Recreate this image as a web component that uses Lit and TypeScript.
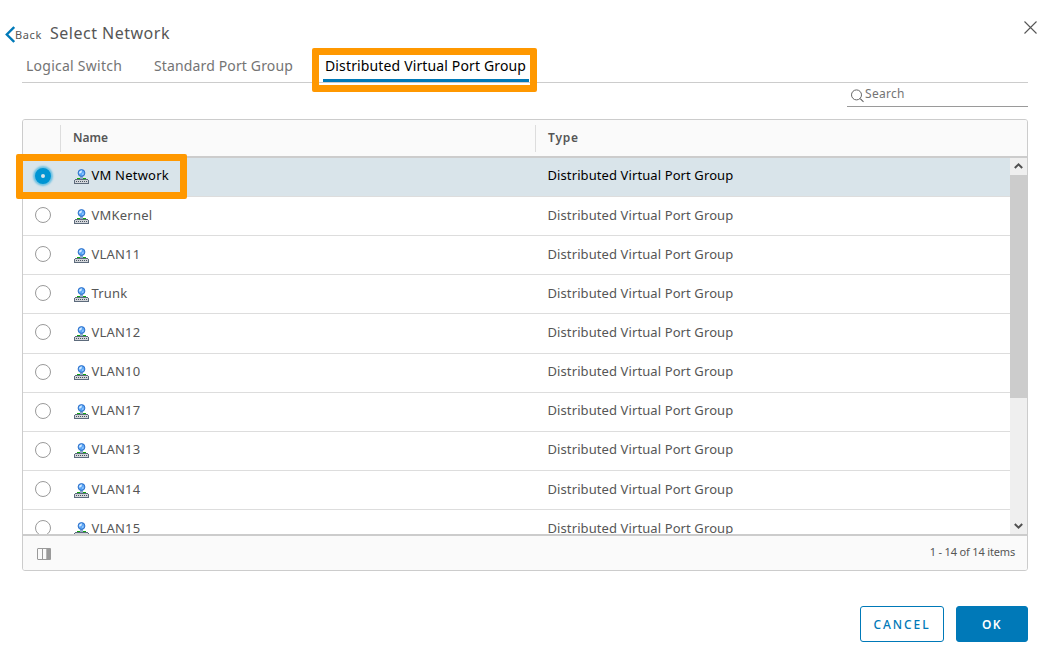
import { LitElement, html, css } from "lit";
import { customElement, property } from "lit/decorators.js";

const NETWORKS = ["VM Network", "VMKernel", "VLAN11", "Trunk", "VLAN12", "VLAN10", "VLAN17", "VLAN13", "VLAN14", "VLAN15"];

@customElement("port-group-icon")
class PortGroupIcon extends LitElement {
  static styles = css`
    :host { display: block; width: 15px; height: 15px; }
    svg { display: block; }
  `;
  render() {
    return html`<svg width="15" height="15" viewBox="0 0 15 15">
      <path d="M6 7h3v3H6z" fill="#8fa9c8" />
      <path d="M3 9h3v1H3zM9 9h3v1H9z" fill="#11a611" />
      <circle cx="7.5" cy="4" r="3.4" fill="#5aa5f5" stroke="#2468c4" stroke-width=".9" />
      <path d="M5 4C5.200 2.200 6.300 1.300 8 1.500L7.600 3.500 5.800 4.800z" fill="#d4eaff" />
      <path d="M8.300 4.200l1.500-.7-.5 2.200-1.300.5z" fill="#9accff" />
      <g shape-rendering="crispEdges">
        <path d="M1 10h13v1h1v4H0v-4h1z" fill="#5d6b7c" />
        <path d="M1 11h13v3H1z" fill="#d3d6da" />
        <path d="M2 12h1v1H2zM4 12h1v1H4zM6 12h1v1H6zM8 12h1v1H8zM10 12h1v1h-1zM12 12h1v1h-1z" fill="#4b5563" />
      </g>
    </svg>`;
  }
}

@customElement("network-row")
class NetworkRow extends LitElement {
  @property() name = "";
  @property({ type: Boolean, reflect: true }) selected = false;
  static styles = css`
    :host {
      display: grid; grid-template-columns: 51px 473.5px 1fr; box-sizing: border-box;
      height: 39.15px; flex: none; border-bottom: 1px solid #ddd; color: #565656; background: #fff;
      font-size: 13px; line-height: 37px;
    }
    :host([selected]) { background: #d9e4ea; color: #000; }
    .radio {
      box-sizing: border-box; width: 16px; height: 16px; margin: 10px 0 0 12px;
      border: 1px solid #9a9a9a; border-radius: 50%; background: #fff;
    }
    :host([selected]) .radio {
      border: 6px solid #0095d3; background: #d9e4ea; box-shadow: 0 0 2px 2px #6bc1e3;
    }
    .name { display: flex; letter-spacing: .23px; margin-top: -.45px; }
    port-group-icon { margin: 12px 2.4px 0 0; }
    .type { letter-spacing: .1px; margin-top: -.45px; }
  `;
  render() {
    return html`<div class="radio"></div>
      <div class="name"><port-group-icon></port-group-icon><span>${this.name}</span></div>
      <div class="type">Distributed Virtual Port Group</div>`;
  }
}

@customElement("app-root")
class AppRoot extends LitElement {
  static styles = css`
    :host {
      display: block; position: relative; box-sizing: border-box; width: 1047px; height: 661px;
      overflow: hidden; background: #fff; color: #565656; font-family: "Noto Sans", sans-serif;
    }
    svg { display: block; }
    .top { display: flex; height: 50px; }
    .back { display: flex; padding: 26px 0 0 5px; width: 50px; box-sizing: border-box; font-size: 11px; line-height: 18px; letter-spacing: .6px; }
    .title { font-size: 16px; line-height: 24px; padding-top: 21px; letter-spacing: .5px; flex: 1; }
    .close { padding: 21px 10px 0 0; }
    .tabs { display: flex; margin: 0 19px 0 22px; height: 32px; border-bottom: 1px solid #ccc; font-size: 14px; line-height: 32px; letter-spacing: .14px; color: #747474; }
    .tab { white-space: nowrap; box-sizing: border-box; height: 32px; }
    .first { width: 128px; padding-left: 4px; letter-spacing: .25px; }
    .second { width: 173px; padding-left: 4px; }
    .active { width: 206px; padding-left: 2px; color: #000; border-bottom: 3px solid #0079b8; }
    .search { display: flex; box-sizing: border-box; width: 181px; height: 24px; margin-left: 847px; padding-left: 4px; border-bottom: 1px solid #9a9a9a; font-size: 12px; line-height: 21px; letter-spacing: .3px; color: #747474; }
    .search svg { margin: 6px 0 0; }
    .table { box-sizing: border-box; width: 1006px; height: 452px; margin: 12px 0 0 22px; border: 1px solid #ccc; border-radius: 3px; overflow: hidden; display: flex; flex-direction: column; }
    .head { display: flex; align-items: flex-start; padding-top: 5px; box-sizing: border-box; height: 38px; flex: none; border-bottom: 2px solid #ccc; background: #fafafa; font-size: 12px; font-weight: 600; line-height: 25px; }
    .cell { box-sizing: border-box; height: 27px; border-left: 1px solid #ddd; padding-left: 12px; }
    .cell.name { margin-left: 37px; width: 475px; }
    .cell.type { letter-spacing: .8px; }
    .body { display: flex; height: 376px; flex: none; overflow: hidden; }
    .rows { display: flex; flex-direction: column; flex: 1; margin-top: -.15px; }
    .bar { width: 17px; background: #efefef; display: flex; flex-direction: column; }
    .thumb { height: 223px; background: #ccc; margin-bottom: 119px; }
    .foot { display: flex; justify-content: space-between; flex: 1; border-top: 2px solid #ccc; background: #fafafa; padding: 0 12px 0 14px; font-size: 11px; line-height: 32px; letter-spacing: -.17px; }
    .foot svg { margin-top: 12px; }
    .actions { display: flex; justify-content: flex-end; gap: 12px; margin: 35px 19px 0 0; }
    button { box-sizing: border-box; height: 36px; border: 1px solid #0079b8; border-radius: 3px; padding: 0; font: 500 12px "Noto Sans", sans-serif; letter-spacing: 1.4px; }
    .cancel { width: 84px; background: #fff; color: #0079b8; letter-spacing: 1.95px; }
    .ok { width: 72px; background: #0079b8; color: #fff; font-weight: 600; }
    .mark { position: absolute; box-sizing: border-box; border: 7px solid #ff9800; border-radius: 2px; pointer-events: none; }
    .mark-tab { left: 312px; top: 48px; width: 225px; height: 44px; }
    .mark-row { left: 16px; top: 154px; width: 171px; height: 45px; }
  `;
  render() {
    return html`
      <div class="top">
        <div class="back"><svg width="10" height="17" viewBox="0 0 10 17"><path d="M9.2 1 1.8 8.5 9.2 16" fill="none" stroke="#0079b8" stroke-width="2.4" /></svg><span>Back</span></div>
        <div class="title">Select Network</div>
        <div class="close"><svg width="13" height="13" viewBox="0 0 13 13"><path d="M.5.5l12 12M12.5.5l-12 12" stroke="#565656" stroke-width="1.1" /></svg></div>
      </div>
      <div class="tabs">
        <div class="tab first">Logical Switch</div>
        <div class="tab second">Standard Port Group</div>
        <div class="tab active">Distributed Virtual Port Group</div>
      </div>
      <div class="search"><svg width="14" height="14" viewBox="0 0 14 14"><circle cx="5.5" cy="5.9" r="5" fill="none" stroke="#666" /><path d="M9.2 9.6l3.3 3.3" stroke="#666" stroke-width="1.1" /></svg><span>Search</span></div>
      <div class="table">
        <div class="head"><div class="cell name">Name</div><div class="cell type">Type</div></div>
        <div class="body">
          <div class="rows">${NETWORKS.map((n, i) => html`<network-row .name=${n} ?selected=${i === 0}></network-row>`)}</div>
          <div class="bar">
            <svg width="17" height="17" viewBox="0 0 17 17"><path d="M4.8 10l3.7-3.7 3.7 3.7" fill="none" stroke="#505050" stroke-width="2" /></svg>
            <div class="thumb"></div>
            <svg width="17" height="17" viewBox="0 0 17 17"><path d="M4.8 7l3.7 3.7L12.2 7" fill="none" stroke="#505050" stroke-width="2" /></svg>
          </div>
        </div>
        <div class="foot">
          <svg width="14" height="12" viewBox="0 0 14 12"><rect x=".5" y=".5" width="13" height="11" rx=".5" fill="#fafafa" stroke="#9a9a9a" /><path d="M5.5 1v10" stroke="#9a9a9a" /><path d="M10 0h3.5v12H10z" fill="#9a9a9a" /><path d="M9.5 1v10" stroke="#b5b5b5" /></svg>
          <span>1 - 14 of 14 items</span>
        </div>
      </div>
      <div class="actions"><button class="cancel">CANCEL</button><button class="ok">OK</button></div>
      <div class="mark mark-tab"></div>
      <div class="mark mark-row"></div>
    `;
  }
}
